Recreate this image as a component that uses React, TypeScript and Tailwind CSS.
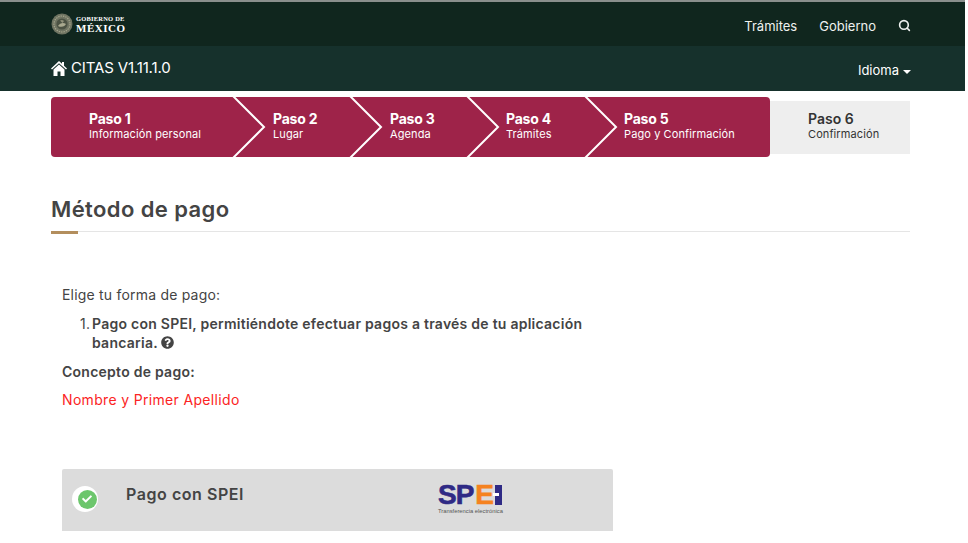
import { Search } from 'lucide-react';
import { FaCheck, FaQuestionCircle } from 'react-icons/fa';

const steps = [
    { title: 'Paso 1', label: 'Información personal', className: 'w-[183px] pl-[38px]', chevron: false },
    { title: 'Paso 2', label: 'Lugar', className: 'w-[117px] pl-[39px]', chevron: true },
    { title: 'Paso 3', label: 'Agenda', className: 'w-[117px] pl-[39px]', chevron: true },
    { title: 'Paso 4', label: 'Trámites', className: 'w-[118px] pl-[38px]', chevron: true },
    { title: 'Paso 5', label: 'Pago y Confirmación', className: 'w-[184px] pl-[38px]', chevron: true },
];

function Chevron() {
    return (
        <svg className="absolute left-[-2px] top-0 h-[60px] w-[34px]" viewBox="0 0 34 60" fill="none">
            <path d="M1 -1 L32 30 L1 61" stroke="#fff" strokeWidth="2" />
        </svg>
    );
}

function Seal() {
    return (
        <svg className="h-[22px] w-[22px]" viewBox="0 0 22 22">
            <circle cx="11" cy="11" r="10.5" fill="#6f7462" />
            <circle cx="11" cy="11" r="8" fill="none" stroke="#a5a58c" strokeWidth="1.2" strokeDasharray="1.4 1" />
            <circle cx="11" cy="11" r="5.6" fill="#4b5243" />
            <path d="M7 13c2-3 5-4 8-2-1 2-4 4-8 2z" fill="#a9a98f" />
            <path d="M9 7.5c1.500-1 3-.6 4 .6l-1.500 2z" fill="#8f9079" />
        </svg>
    );
}

function HomeIcon() {
    return (
        <svg className="h-[15px] w-[16px]" viewBox="0 0 16 15" fill="#fff">
            <path d="M8 0 L11 2.800 V1 H13 V4.700 L16 7.500 L15 8.600 L8 2.200 L1 8.600 L0 7.500 Z" />
            <path d="M8 3.600 L13.500 8.600 V15 H9.500 V10.500 H6.500 V15 H2.500 V8.600 Z" />
        </svg>
    );
}

function SpeiLogo() {
    return (
        <div className="mt-[15px] ml-[194px] flex w-[66px] flex-col items-start">
            <div className="flex h-[22px] items-center font-['Liberation_Sans',sans-serif] text-[28px] leading-none font-bold tracking-[-1px] [-webkit-text-stroke:0.6px]">
                <span className="text-[#2f2a85]">SP</span>
                <span className="ml-[2px] text-[#f58220]">E</span>
                <span className="relative ml-[2px] h-[20px] w-[7px] bg-[#2f2a85]">
                    <span className="absolute top-[8px] left-[-2px] h-[3px] w-[6px] bg-white" />
                </span>
            </div>
            <div className="mt-[3px] font-['Liberation_Sans',sans-serif] text-[5.800px] leading-none whitespace-nowrap text-[#555]">
                Transferencia electrónica
            </div>
        </div>
    );
}

export default function App() {
    return (
        <div className="h-[543px] w-[968px] overflow-hidden bg-white font-['Inter','Noto_Sans',sans-serif] text-[#444]">
            <div className="w-[965px] border-t-2 border-[#8a8f8d]">
                <header className="flex h-[44px] items-center bg-[#10261e] pr-[54px] pl-[51px] text-white">
                    <div className="flex items-center gap-[3px]">
                        <Seal />
                        <div className="font-['Liberation_Serif',serif] font-bold">
                            <div className="text-[6.500px] leading-[8px] tracking-[0.2px]">GOBIERNO DE</div>
                            <div className="text-[11px] leading-[10px] tracking-[0.5px]">MÉXICO</div>
                        </div>
                    </div>
                    <nav className="ml-auto flex items-center pt-[5px] text-[13px] text-[#eef1ef]">
                        <span>Trámites</span>
                        <span className="ml-[22px]">Gobierno</span>
                        <Search className="mb-[3px] ml-[22px] h-[13px] w-[13px]" strokeWidth={3} />
                    </nav>
                </header>
                <div className="flex h-[45px] items-center bg-[#16312c] pr-[54px] pl-[51px] text-white">
                    <div className="flex items-center gap-[4px] pb-[1px] text-[15px]">
                        <HomeIcon />
                        <span className="tracking-[-0.15px]">CITAS V1.11.1.0</span>
                    </div>
                    <div className="ml-auto flex items-center gap-[4px] pt-[4px] text-[13px]">
                        <span>Idioma</span>
                        <span className="mt-[3px] h-0 w-0 border-x-[4px] border-t-[4px] border-x-transparent border-t-white" />
                    </div>
                </div>

                <div className="mt-[6px] ml-[51px] flex w-[859px] items-center">
                    <div className="flex h-[60px] overflow-hidden rounded-[4px] bg-[#9e2349] text-white">
                        {steps.map((step) => (
                            <div key={step.title} className={`relative flex flex-col justify-center pb-[4px] ${step.className}`}>
                                {step.chevron ? <Chevron /> : null}
                                <div className="text-[14px] leading-[17px] font-bold tracking-[-0.2px]">{step.title}</div>
                                <div className="text-[11px] leading-[14px] tracking-[0.1px] whitespace-nowrap">{step.label}</div>
                            </div>
                        ))}
                    </div>
                    <div className="flex h-[53px] w-[140px] flex-col justify-center bg-[#eeeeee] pb-[4px] pl-[38px] text-[#333]">
                        <div className="text-[14px] leading-[17px] font-semibold">Paso 6</div>
                        <div className="text-[11px] leading-[14px] tracking-[0.1px]">Confirmación</div>
                    </div>
                </div>

                <main className="ml-[51px] w-[859px]">
                    <h1 className="mt-[38px] text-[22px] leading-[28px] font-semibold tracking-[0.4px]">Método de pago</h1>
                    <div className="relative mt-[8px] h-px bg-[#e5e5e5]">
                        <div className="absolute top-0 left-0 h-[3px] w-[27px] bg-[#b38e5d]" />
                    </div>

                    <div className="mt-[53px] ml-[11px] w-[551px]">
                        <p className="text-[14px] leading-[20px] tracking-[0.2px]">Elige tu forma de pago:</p>
                        <ol className="mt-[9px] w-[530px]">
                            <li className="flex text-[14px] leading-[19px] font-semibold tracking-[0.25px]">
                                <span className="w-[30px] shrink-0 pl-[18px] font-normal">1.</span>
                                <span>
                                    Pago con SPEI, permitiéndote efectuar pagos a través de tu aplicación bancaria.{' '}
                                    <FaQuestionCircle className="inline h-[13px] w-[13px] align-[-1px]" />
                                </span>
                            </li>
                        </ol>
                        <p className="mt-[10px] text-[14px] leading-[20px] font-semibold tracking-[0.25px]">Concepto de pago:</p>
                        <p className="mt-[8px] text-[14px] leading-[20px] tracking-[0.33px] text-[#fb2424]">Nombre y Primer Apellido</p>

                        <div className="mt-[59px] flex h-[62px] rounded-t-[2px] bg-[#dcdcdc]">
                            <div className="mt-[17px] ml-[10px] flex h-[26px] w-[26px] items-center justify-center rounded-full bg-white">
                                <div className="ml-[4px] flex h-[19px] w-[19px] shrink-0 items-center justify-center rounded-full bg-[#6cc66c] text-white">
                                    <FaCheck className="h-[10px] w-[10px]" />
                                </div>
                            </div>
                            <div className="mt-[14px] ml-[28px] w-[118px] text-[16px] leading-[22px] font-semibold tracking-[0.55px] whitespace-nowrap">Pago con SPEI</div>
                            <SpeiLogo />
                        </div>
                    </div>
                </main>
            </div>
        </div>
    );
}
